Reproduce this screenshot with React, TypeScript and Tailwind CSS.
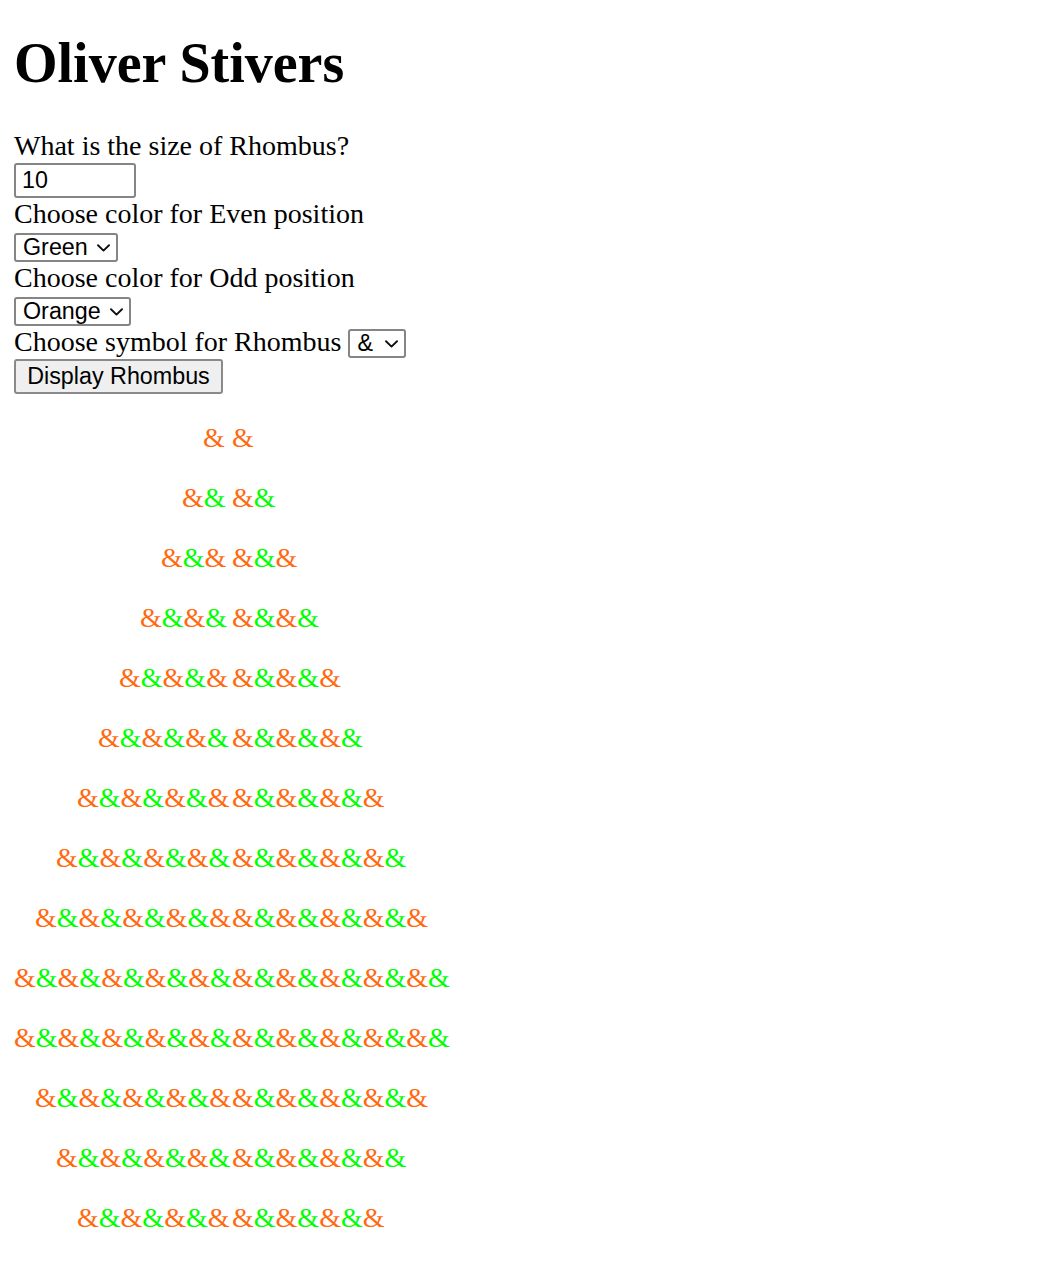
import React from "react";

const ORANGE = "#ff6a10";
const GREEN = "#00ff00";
const SIZE = 10;

function Chevron() {
  return (
    <svg width="13" height="8" viewBox="0 0 13 8" fill="none" className="shrink-0">
      <path d="M1 1.2 L6.5 6.6 L12 1.2" stroke="#111" strokeWidth="1.9" strokeLinecap="round" strokeLinejoin="round" />
    </svg>
  );
}

function FakeSelect({ label, width }: { label: string; width: number }) {
  return (
    <div
      className="inline-flex h-[29px] items-center justify-between rounded-[3px] border-2 border-[#858585] bg-white pl-[7px] pr-[6px] font-['Liberation_Sans',Arial,sans-serif] text-[23.3px] leading-none text-black"
      style={{ width }}
    >
      <span>{label}</span>
      <Chevron />
    </div>
  );
}

function Half({ count }: { count: number }) {
  return (
    <>
      {Array.from({ length: count }, (_, j) => (
        <span key={j} style={{ color: j % 2 === 0 ? ORANGE : GREEN }}>
          &amp;
        </span>
      ))}
    </>
  );
}

function Row({ n }: { n: number }) {
  return (
    <div className="flex h-[32px] whitespace-nowrap">
      <div className="w-[218px] shrink-0" style={{ paddingLeft: (SIZE - n) * 21 }}>
        <Half count={n} />
      </div>
      <div>
        <Half count={n} />
      </div>
    </div>
  );
}

export default function App() {
  const rows: number[] = [];
  for (let i = 1; i <= SIZE; i++) rows.push(i);
  for (let i = SIZE; i >= 7; i--) rows.push(i);

  return (
    <div className="min-h-screen bg-white px-[14px] pt-[31px] font-['Liberation_Serif','Times_New_Roman',serif] text-[28px] leading-[32px] text-black">
      <h1 className="m-0 text-[56px] font-bold leading-[64px]">Oliver Stivers</h1>

      <div className="mt-[35px] flex flex-col items-start">
        <div>What is the size of Rhombus?</div>
        <div className="mt-[1px] flex h-[35px] w-[122px] items-center rounded-[3px] border-2 border-[#858585] bg-white pl-[6px] font-['Liberation_Sans',Arial,sans-serif] text-[23.3px] leading-none">
          10
        </div>

        <div>Choose color for Even position</div>
        <div className="flex h-[32px] items-end">
          <FakeSelect label="Green" width={104} />
        </div>

        <div>Choose color for Odd position</div>
        <div className="flex h-[32px] items-end">
          <FakeSelect label="Orange" width={117} />
        </div>

        <div className="flex h-[32px] items-end">
          <span className="mr-[7px] self-start">Choose symbol for Rhombus</span>
          <FakeSelect label="&" width={58} />
        </div>

        <button className="mt-[1px] flex h-[35px] w-[209px] items-center justify-center rounded-[3px] border-2 border-[#8a8a8a] bg-[#efefef] font-['Liberation_Sans',Arial,sans-serif] text-[23.3px] leading-none text-black">
          Display Rhombus
        </button>
      </div>

      <div className="mt-[28px] flex flex-col gap-[28px] pb-[28px]">
        {rows.map((n, idx) => (
          <Row key={idx} n={n} />
        ))}
      </div>
    </div>
  );
}
